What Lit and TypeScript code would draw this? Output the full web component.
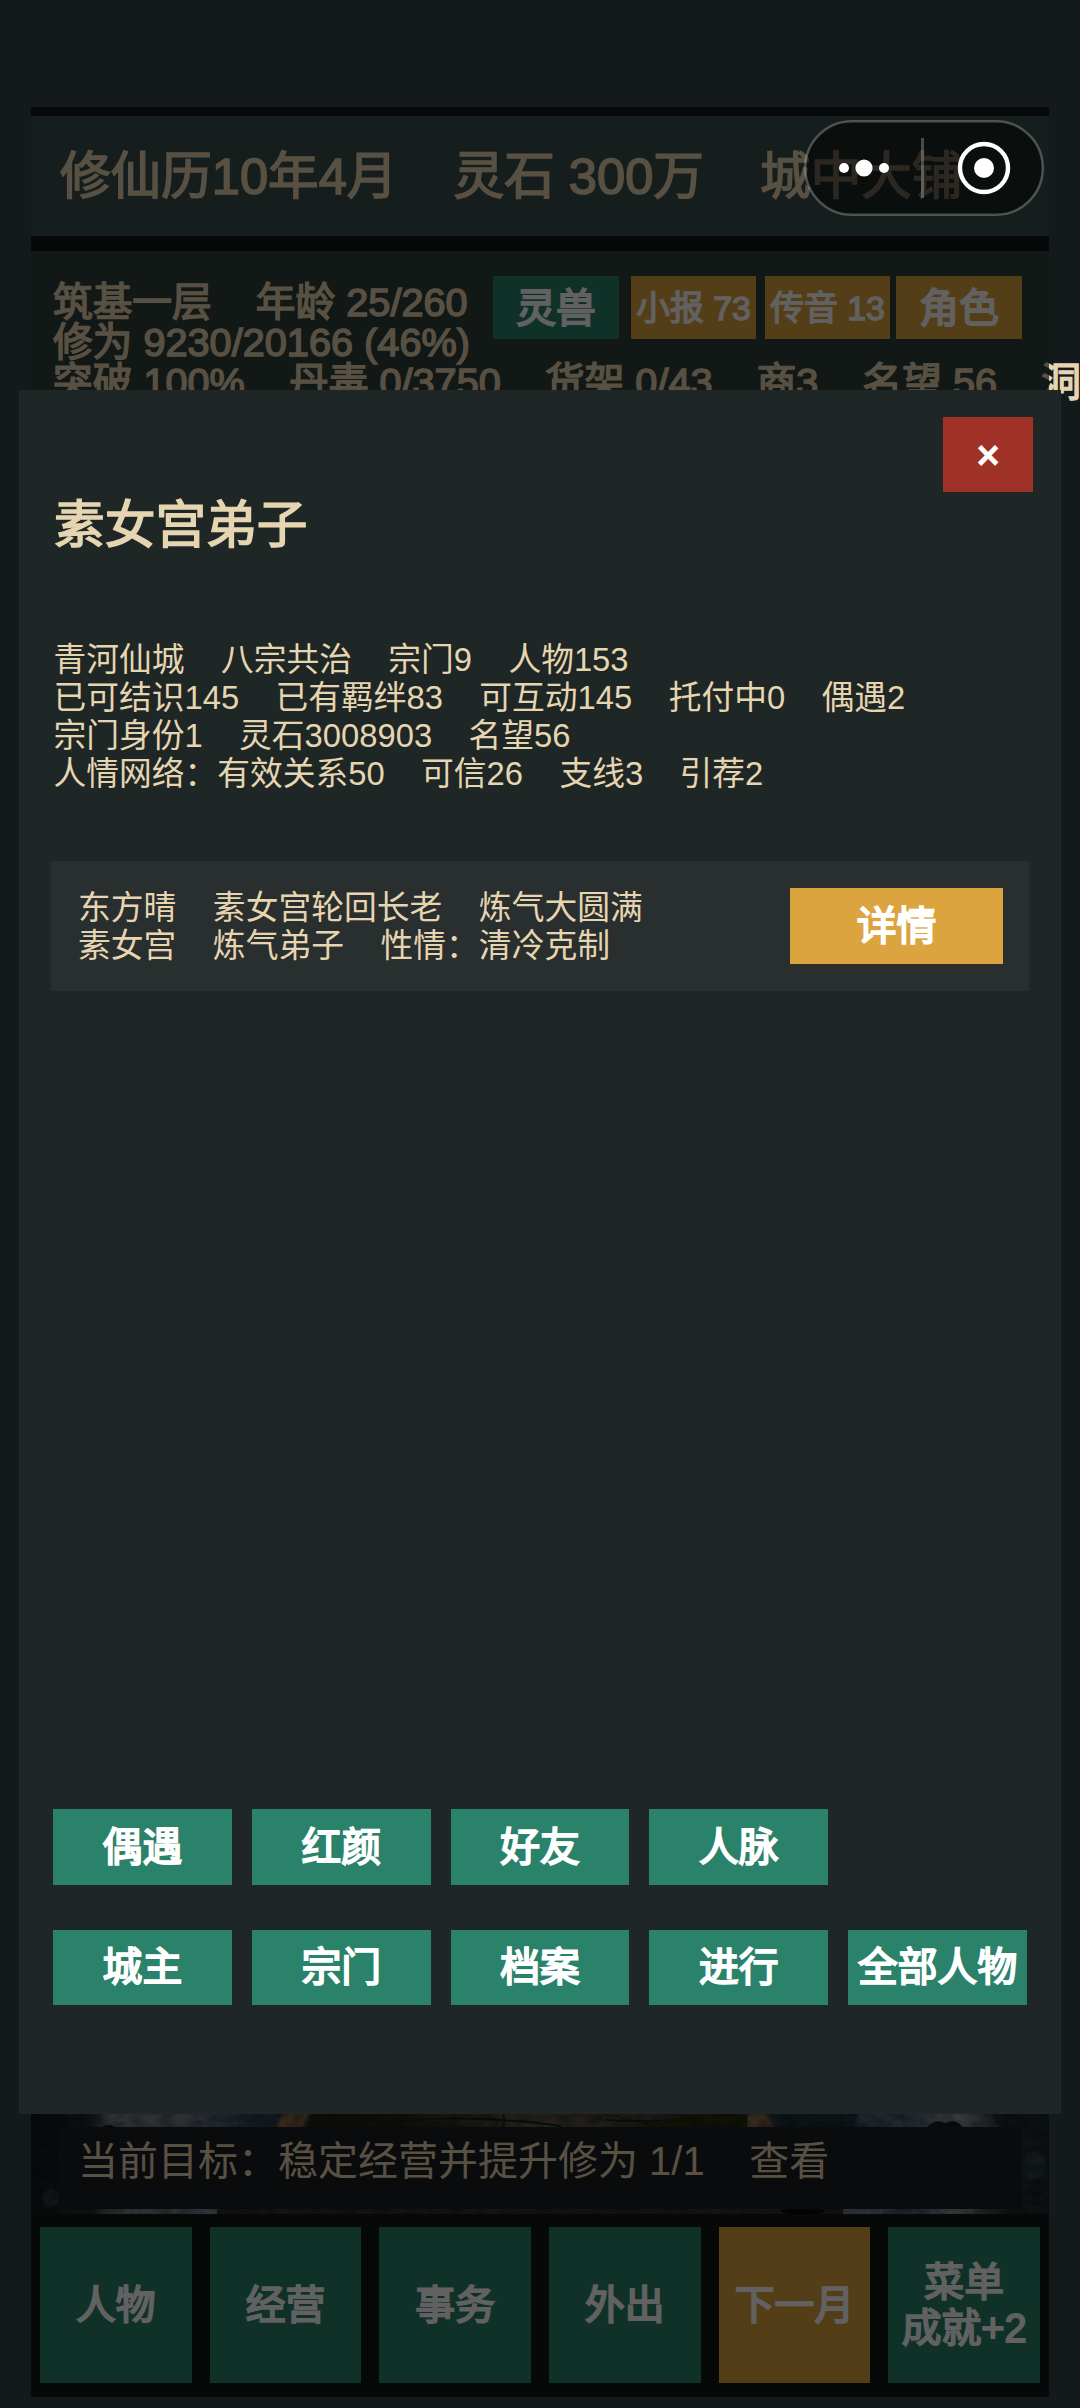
import { LitElement, html, css, svg } from "lit";
import { customElement } from "lit/decorators.js";

const GAP = "    ";
const line = (...parts: string[]) => parts.join(GAP);

const HEADER = line("修仙历10年4月", "灵石 300万", "城中大铺");

const STATUS = [
  line("筑基一层", "年龄 25/260"),
  "修为 9230/20166 (46%)",
  line("突破 100%", "丹毒 0/3750", "货架 0/43", "商3", "名望 56", "洞"),
];

const SHORTCUTS = [
  { label: "灵兽", cls: "beast green" },
  { label: "小报 73", cls: "news gold small" },
  { label: "传音 13", cls: "voice gold small" },
  { label: "角色", cls: "role gold" },
];

const SUMMARY = [
  line("青河仙城", "八宗共治", "宗门9", "人物153"),
  line("已可结识145", "已有羁绊83", "可互动145", "托付中0", "偶遇2"),
  line("宗门身份1", "灵石3008903", "名望56"),
  line("人情网络：有效关系50", "可信26", "支线3", "引荐2"),
];

const PEOPLE = [
  {
    rows: [
      line("东方晴", "素女宫轮回长老", "炼气大圆满"),
      line("素女宫", "炼气弟子", "性情：清冷克制"),
    ],
  },
];

const FILTERS = [
  ["偶遇", "红颜", "好友", "人脉"],
  ["城主", "宗门", "档案", "进行", "全部人物"],
];

const NAV = [
  { rows: ["人物"], cls: "green" },
  { rows: ["经营"], cls: "green" },
  { rows: ["事务"], cls: "green" },
  { rows: ["外出"], cls: "green" },
  { rows: ["下一月"], cls: "gold" },
  { rows: ["菜单", "成就+2"], cls: "green" },
];

const scene = svg`
  <defs>
    <filter id="soft" x="-5%" y="-5%" width="110%" height="110%"><feGaussianBlur stdDeviation="1.6" /></filter>
    <filter id="grain" x="0" y="0" width="100%" height="100%">
      <feTurbulence type="fractalNoise" baseFrequency="0.07 0.12" numOctaves="3" seed="4" />
      <feColorMatrix values="0 0 0 0 0  0 0 0 0 0  0 0 0 0 0  1.9 0 0 0 -0.6" />
    </filter>
    <linearGradient id="sky" x1="0" x2="1">
      <stop offset="0" stop-color="#1b2323" /><stop offset=".06" stop-color="#2a3136" />
      <stop offset=".08" stop-color="#7c858f" /><stop offset=".15" stop-color="#76808b" />
      <stop offset=".19" stop-color="#4d6072" /><stop offset=".25" stop-color="#2c3c49" />
      <stop offset=".29" stop-color="#272f34" /><stop offset=".36" stop-color="#25271b" />
      <stop offset=".43" stop-color="#443f35" /><stop offset=".5" stop-color="#625950" />
      <stop offset=".58" stop-color="#50483d" /><stop offset=".67" stop-color="#303024" />
      <stop offset=".7" stop-color="#26303a" /><stop offset=".78" stop-color="#4b5f76" />
      <stop offset=".86" stop-color="#56697f" /><stop offset=".91" stop-color="#9297a0" />
      <stop offset=".935" stop-color="#5f6772" /><stop offset=".96" stop-color="#2a3237" />
      <stop offset="1" stop-color="#1b252a" />
    </linearGradient>
  </defs>
  <rect width="1018" height="100" fill="url(#sky)" />
  <g filter="url(#soft)">
    <path d="M0 0H35L42 14 30 30 36 60 26 100H0Z" fill="#161e20" />
    <ellipse cx="20" cy="84" rx="8" ry="9" fill="#35424a" />
    <path d="M246 16Q248 2 258-4H280L270 16Z" fill="#93704c" />
    <path d="M282-2H350L342 14H276Z" fill="#2a2216" />
    <path d="M716-2H734L744 16H716Z" fill="#8d6a50" />
    <path d="M744-2H828L824 16H748Z" fill="#243440" />
    <path d="M958-2H1018V100H990L996 66 986 40Z" fill="#222d33" />
    <ellipse cx="1003" cy="52" rx="12" ry="14" fill="#33434e" />
  </g>
  <path d="M365 8Q400 3 450 5T530 12M575 6Q620 9 690 4M472 0Q476 8 470 14" fill="none" stroke="#221f17" stroke-width="2" />
  <path d="M580 0Q600 12 640 5T716 2V14H620Q600 4 580 0Z" fill="#2d3316" />
  <path d="M70 14Q76 8 84 13ZM36 2L42 8 46 4ZM896 13Q905 4 914 9 924 4 932 13Z" fill="#1b2422" />
  <path d="M160 94H186V100H160ZM812 94H852V100H812Z" fill="#7d8a99" />
  <path d="M186 94H812V100H186Z" fill="#3a342c" />
  <ellipse cx="772" cy="97" rx="22" ry="4" fill="#0d0b09" />
  <rect width="1018" height="100" filter="url(#grain)" opacity=".35" />
`;

@customElement("app-root")
export class AppRoot extends LitElement {
  static styles = css`
    :host {
      display: block;
      position: relative;
      width: 1080px;
      height: 2408px;
      overflow: hidden;
      box-sizing: border-box;
      padding: 107px 31px 11px;
      background: #14191c;
      font-family: "Liberation Sans", "Noto Sans CJK SC", sans-serif;
      color: #e6d5b1;
      white-space: pre;
    }
    .stage {
      position: relative;
      display: flex;
      flex-direction: column;
      height: 2290px;
      background: #131519;
    }
    .header {
      margin-top: 9px;
      height: 120px;
      box-sizing: border-box;
      padding-left: 29px;
      background: #37504a;
      font-size: 50.6px;
      line-height: 121px;
      -webkit-text-stroke: 1.6px currentColor;
    }
    .status {
      flex: 1;
      margin-top: 15px;
      display: grid;
      grid-template-columns: 462px auto;
      align-content: start;
      padding-top: 25px;
      background: #2f3f3c;
    }
    .lines {
      padding: 6px 0 0 22px;
      width: 400px;
      font-size: 39.7px;
      line-height: 40px;
      -webkit-text-stroke: 1.5px currentColor;
    }
    .shortcuts {
      display: flex;
      align-items: flex-start;
    }
    .btn {
      display: flex;
      flex-direction: column;
      align-items: center;
      justify-content: center;
      box-sizing: border-box;
      border: 0;
      padding: 0;
      margin: 0;
      font: inherit;
      font-size: 39.8px;
      line-height: 46px;
      color: #fff;
      -webkit-text-stroke: 1.9px currentColor;
    }
    .green { background: #2a826a; }
    .gold { background: #dba43e; }
    .shortcuts .btn { height: 63px; width: 126px; }
    .shortcuts .small { width: 125px; font-size: 33.8px; -webkit-text-stroke-width: 1.4px; }
    .news { margin-left: 12px; }
    .voice { margin-left: 9px; }
    .role { margin-left: 6px; }
    .scene {
      position: relative;
      height: 100px;
      display: grid;
    }
    .scene > * { grid-area: 1 / 1; }
    .scene svg { display: block; }
    .goal {
      position: relative;
      margin: 13px 27px 5px;
      padding: 11px 20px 0;
      background: #1a1d22;
      font-size: 40px;
      line-height: 46px;
    }
    .nav {
      display: grid;
      grid-template-columns: repeat(6, 1fr);
      gap: 18px;
      padding: 13px 9px 14px;
      background: #141816;
    }
    .nav .btn { height: 156px; }
    .veil {
      position: absolute;
      inset: 0;
      background: rgba(0, 0, 0, 0.62);
    }
    .modal {
      position: absolute;
      left: 19px;
      top: 390px;
      width: 1042px;
      height: 1724px;
      box-sizing: border-box;
      display: flex;
      flex-direction: column;
      padding: 27px 32px 109px;
      background: #1f2726;
    }
    .btn.close {
      align-self: flex-end;
      width: 90px;
      height: 75px;
      margin-right: -4px;
      background: #9f3126;
    }
    .title {
      margin: 4px 0 0 3px;
      font-size: 50.7px;
      font-weight: 400;
      line-height: 60px;
      -webkit-text-stroke: 1.6px currentColor;
    }
    .summary {
      margin: 85px 0 68px 2.5px;
      font-size: 32.76px;
      line-height: 38px;
    }
    .card {
      display: flex;
      align-items: center;
      justify-content: space-between;
      height: 130px;
      box-sizing: border-box;
      padding: 0 26px 0 27px;
      background: #292e2e;
      font-size: 32.8px;
      line-height: 38px;
    }
    .people-rows { padding-top: 2px; }
    .detail { width: 213px; height: 76px; }
    .filters {
      margin: auto 2px 0;
      display: grid;
      gap: 45px;
    }
    .filter-row {
      display: grid;
      grid-template-columns: repeat(5, 1fr);
      gap: 20px;
    }
    .filter-row .btn { height: 75.5px; }
    .capsule {
      position: absolute;
      left: 804px;
      top: 120px;
    }
  `;

  private button(rows: string[], cls: string) {
    return html`<button class="btn ${cls}">${rows.map((r) => html`<span>${r}</span>`)}</button>`;
  }

  render() {
    return html`<div class="stage"
        ><div class="header">${HEADER}</div
        ><div class="status"
          ><div class="lines">${STATUS.map((s) => html`<div>${s}</div>`)}</div
          ><div class="shortcuts">${SHORTCUTS.map((s) => this.button([s.label], s.cls))}</div
        ></div
        ><div class="scene"
          ><svg width="1018" height="100" viewBox="0 0 1018 100">${scene}</svg
          ><div class="goal">${line("当前目标：稳定经营并提升修为 1/1", "查看")}</div
        ></div
        ><div class="nav">${NAV.map((n) => this.button(n.rows, n.cls))}</div
        ><div class="veil"></div
      ></div
      ><section class="modal"
        >${this.button(["×"], "close")}<h1 class="title">素女宫弟子</h1
        ><div class="summary">${SUMMARY.map((s) => html`<div>${s}</div>`)}</div
        >${PEOPLE.map(
          (p) => html`<div class="card"
            ><div class="people-rows">${p.rows.map((r) => html`<div>${r}</div>`)}</div
            >${this.button(["详情"], "detail gold")}</div
          >`,
        )}<div class="filters"
          >${FILTERS.map(
            (row) => html`<div class="filter-row">${row.map((f) => this.button([f], "green"))}</div>`,
          )}</div
      ></section
      ><svg class="capsule" width="240" height="96" viewBox="0 0 240 96">
        <rect x="1.5" y="1.5" width="237" height="93" rx="46.5" fill="#000" fill-opacity=".5" />
        <rect x="1.25" y="1.25" width="237.5" height="93.5" rx="46.75" fill="none" stroke="#fff" stroke-opacity=".25" stroke-width="2.5" />
        <rect x="117" y="18" width="3" height="60" fill="#fff" fill-opacity=".25" />
        <circle cx="40" cy="48" r="5" fill="#fff" />
        <circle cx="60" cy="48" r="8.6" fill="#fff" />
        <circle cx="80" cy="48" r="5" fill="#fff" />
        <circle cx="180" cy="48" r="24" fill="none" stroke="#fff" stroke-width="4.4" />
        <circle cx="180" cy="48" r="10" fill="#fff" />
      </svg>`;
  }
}
